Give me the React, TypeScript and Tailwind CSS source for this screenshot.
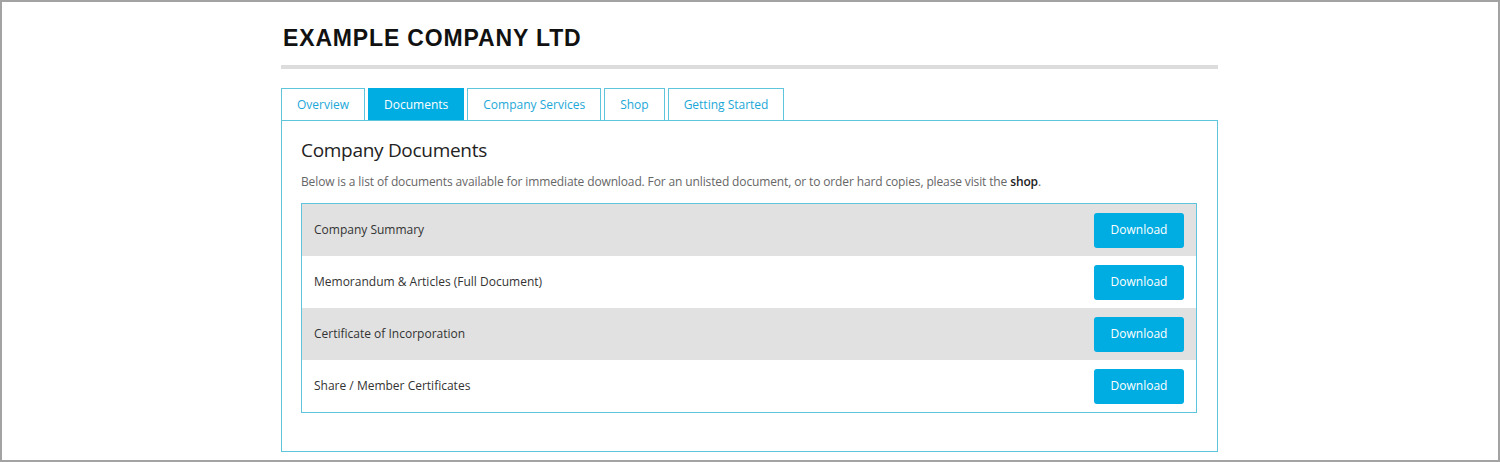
import React from "react";

const tabs = ["Overview", "Documents", "Company Services", "Shop", "Getting Started"];

const docs = [
  "Company Summary",
  "Memorandum & Articles (Full Document)",
  "Certificate of Incorporation",
  "Share / Member Certificates",
];

export default function App() {
  return (
    <div className="w-[1500px] h-[462px] border-2 border-[#a3a3a3] bg-white overflow-hidden" style={{ fontFamily: '"Open Sans", "Noto Sans", sans-serif' }}>
      <div className="ml-[279px] w-[937px]">
        {/* Header */}
        <h1 className="pt-[22px] pl-[2px] text-[23px] leading-[28px] font-bold tracking-[0.85px] text-[#111]" style={{ fontFamily: '"Liberation Sans", Arial, sans-serif' }}>
          EXAMPLE COMPANY LTD
        </h1>
        <div className="mt-[13px] h-[4px] bg-[#dcdcdc]" />

        {/* Tabs */}
        <div className="mt-[19px] flex items-end gap-[3px]">
          {tabs.map((t) => {
            const active = t === "Documents";
            return (
              <div
                key={t}
                className={`h-[32px] px-[15px] flex items-center text-[12px] border border-b-0 ${
                  active ? "bg-[#00ade2] border-[#00ade2] text-white" : "bg-white border-[#5ec5dc] text-[#1ca8d8]"
                }`}
              >
                {t}
              </div>
            );
          })}
        </div>

        {/* Panel */}
        <div className="h-[332px] border border-[#5ec5dc] pl-[19px] pr-[20px] pt-[15px]">
          <h2 className="text-[19px] leading-[28px] tracking-[-0.3px] text-[#222]">Company Documents</h2>
          <p className="mt-[10px] text-[12px] leading-[16px] tracking-[-0.13px] text-[#666]">
            Below is a list of documents available for immediate download. For an unlisted document, or to order hard copies, please visit the <span className="text-[#222] font-semibold">shop</span>.
          </p>
          <div className="mt-[13px] border border-[#5ec5dc]">
            {docs.map((d, i) => (
              <div key={d} className={`h-[52px] flex items-center justify-between pl-[12px] pr-[12px] ${i % 2 === 0 ? "bg-[#e1e1e1]" : "bg-white"}`}>
                <span className="text-[12px] text-[#333]">{d}</span>
                <button className="w-[90px] h-[35px] rounded-[3px] bg-[#00ade2] text-white text-[12px]">Download</button>
              </div>
            ))}
          </div>
        </div>
      </div>
    </div>
  );
}
